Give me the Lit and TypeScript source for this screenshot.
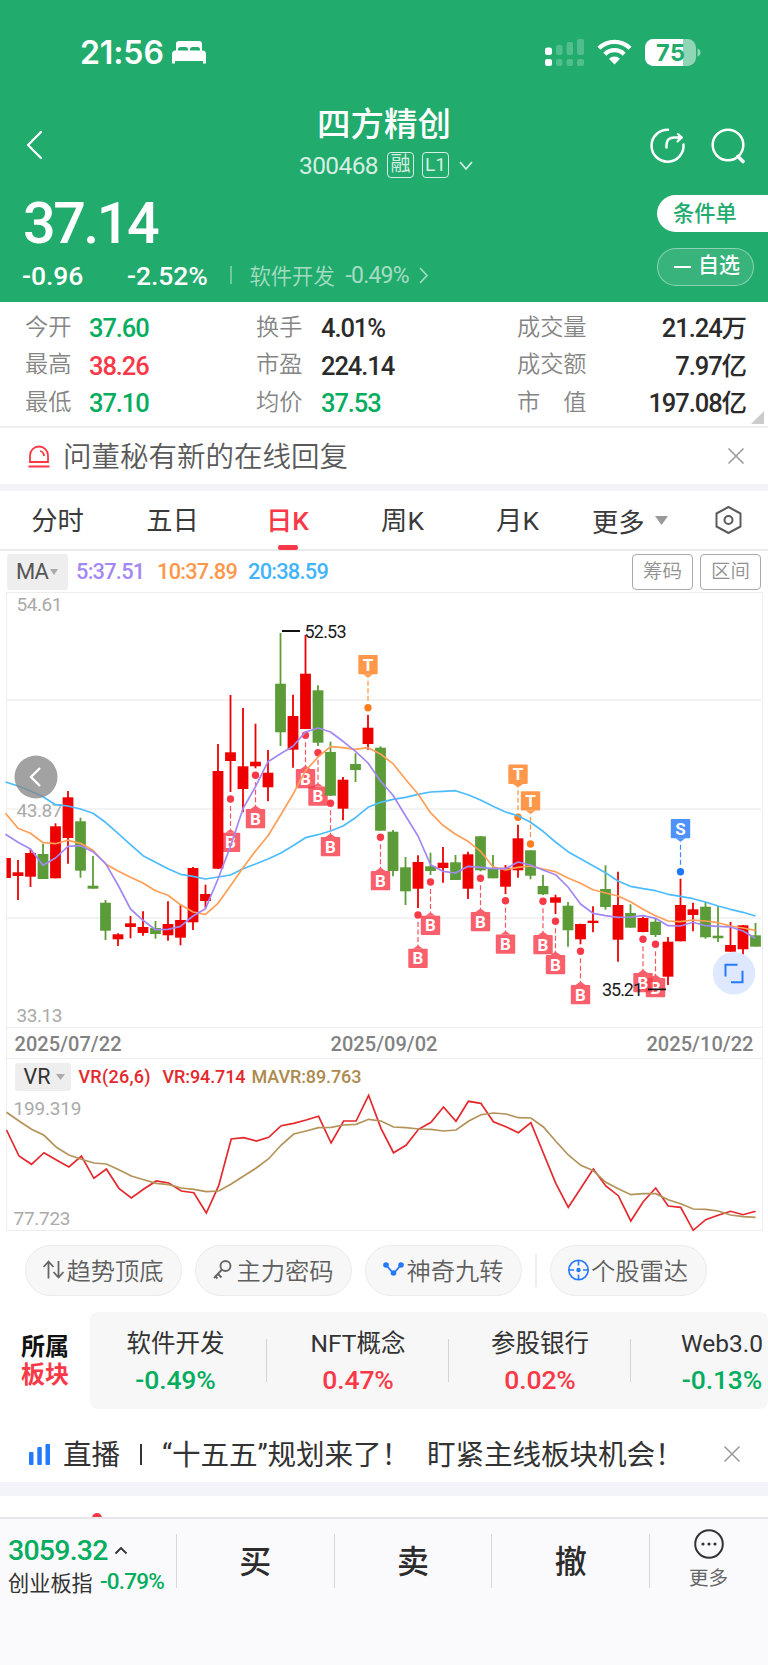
import { LitElement, html, svg, css } from "lit";
import { customElement } from "lit/decorators.js";
import { classMap } from "lit/directives/class-map.js";

const shared = css`
  :host {
    display: block;
    box-sizing: border-box;
    font-family: Roboto, "Noto Sans CJK SC", sans-serif;
  }
  * { box-sizing: border-box; }
  svg { display: block; flex: none; overflow: visible; }
  .num { font-weight: 500; letter-spacing: -0.035em; white-space: nowrap; }
  .up { color: #f93947; }
  .down { color: #06ad5e; }
`;

/* ---------- header ---------- */

@customElement("stock-header")
class StockHeader extends LitElement {
  static styles = [shared, css`
    :host { background: #21ab6d; color: #fff; height: 302px; }
    .status { height: 104px; display: flex; align-items: center; padding: 0 67px 0 80px; }
    .clock { font: 600 32px/40px Inter, sans-serif; letter-spacing: -.1px; width: 92px; padding-top: 2px; }
    .grow { flex: 1; }
    .wifi { margin: 0 13px; }
    .nav { height: 80px; display: flex; align-items: center; padding: 2px 23px 0 26px; }
    .title { flex: 1; display: flex; flex-direction: column; align-items: center; padding-left: 76px; }
    .name { font-size: 33.5px; line-height: 44px; font-weight: 500; margin-top: -4px; }
    .code { display: flex; align-items: center; height: 36px; color: rgba(255,255,255,.82); padding-left: 4px; }
    .code .num { font-size: 24.5px; width: 88px; font-weight: 400; letter-spacing: -.6px; }
    .tag { border: 1.5px solid currentColor; border-radius: 4px; height: 26px; width: 27px; font-size: 20px; line-height: 23px; text-align: center; margin-right: 8px; }
    .tag.small { font-size: 19px; margin-right: 10px; }
    .tools { display: flex; gap: 26px; }
    .body { display: flex; height: 118px; }
    .left { flex: 1; padding-left: 23px; }
    .price { font-size: 57.5px; line-height: 80px; letter-spacing: -2.5px; font-weight: 500; }
    .delta { display: flex; align-items: center; height: 26px; font-size: 26.5px; margin-top: -2px; }
    .abs { width: 105px; margin-left: -1px; letter-spacing: -.003em; }
    .pct { width: 103px; letter-spacing: -.003em; }
    .sep { width: 1.5px; height: 18px; background: rgba(255,255,255,.35); margin-right: 18px; }
    .sector { font-size: 21.3px; color: rgba(255,255,255,.6); width: 96px; font-weight: 350; margin-top: -2px; }
    .spct { font-size: 23px; color: rgba(255,255,255,.6); font-weight: 400; width: 73px; }
    .right { width: 111px; padding-top: 11px; display: flex; flex-direction: column; gap: 16px; }
    .cond { height: 37px; border-radius: 19px 0 0 19px; background: #fff; color: #21ab6d; font-size: 21.2px; line-height: 37px; padding-left: 16px; font-weight: 500; }
    .fav { height: 38px; width: 97px; border-radius: 19px; border: 1px solid rgba(255,255,255,.42); background: rgba(255,255,255,.1); font-size: 21px; line-height: 31px; font-weight: 500; display: flex; align-items: center; padding: 0 0 4px 16px; gap: 7px; }
    .dash { width: 17px; height: 2px; background: #fff; margin-top: 3px; }
  `];
  render() {
    return html`
      <div class="status">
        <span class="clock">21:56</span>
        <svg width="34" height="24" viewBox="0 0 34 24" fill="#fff"><path d="M4 12V4a3 3 0 0 1 3-3h20a3 3 0 0 1 3 3v8h-2V9.500a2.500 2.500 0 0 0-2.500-2.500h-5A2.500 2.500 0 0 0 18 9.500V12h-2V9.500A2.500 2.500 0 0 0 13.500 7h-5A2.500 2.500 0 0 0 6 9.500V12z"/><path d="M0 23.500V14a3.500 3.500 0 0 1 3.500-3.500h27A3.500 3.500 0 0 1 34 14v9.500h-3V21H3v2.500z"/></svg>
        <span class="grow"></span>
        <svg width="39" height="27" viewBox="0 0 39 27" fill="#fff">
          <rect y="8.500" width="7" height="7.500" rx="2.200"/><rect y="20" width="7" height="7" rx="2.200"/>
          <g opacity=".22"><rect x="11" y="6" width="6.500" height="10" rx="2"/><rect x="21.500" y="3" width="6.500" height="13" rx="2"/><rect x="32" y="0" width="7" height="16" rx="2"/><rect x="11" y="20" width="6.500" height="7" rx="2"/><rect x="21.500" y="20" width="6.500" height="7" rx="2"/><rect x="32" y="20" width="7" height="7" rx="2"/></g>
        </svg>
        <svg class="wifi" width="35" height="26" viewBox="0 0 35 26"><path d="M17.500 25.500L12 19.800a8 8 0 0 1 11 0z" fill="#fff"/><path d="M2 9.200a22 22 0 0 1 31 0M7.800 15.200a13.700 13.700 0 0 1 19.400 0" fill="none" stroke="#fff" stroke-width="4.300"/></svg>
        <svg width="56" height="27" viewBox="0 0 56 27"><defs><clipPath id="c"><rect width="38" height="27"/></clipPath></defs><rect width="51" height="27" rx="8.500" fill="#fff" opacity=".5"/><rect width="51" height="27" rx="8.500" fill="#fff" clip-path="url(#c)"/><path d="M52.500 9.500q3 1 3 4t-3 4z" fill="#fff" opacity=".5"/><text x="25.500" y="22" font-family="Inter, sans-serif" font-size="23.500" font-weight="700" text-anchor="middle" textLength="29" fill="#21ab6d">75</text></svg>
      </div>
      <div class="nav">
        <svg width="16" height="28" viewBox="0 0 16 28"><path d="M15 1L2 14l13 13" fill="none" stroke="#fff" stroke-width="2.300" stroke-linecap="round" stroke-linejoin="round"/></svg>
        <div class="title">
          <div class="name">四方精创</div>
          <div class="code"><span class="num">300468</span><span class="tag">融</span><span class="tag small">L1</span>
            <svg width="14" height="9" viewBox="0 0 14 9"><path d="M1 1l6 7 6-7" fill="none" stroke="currentColor" stroke-width="1.700"/></svg></div>
        </div>
        <div class="tools">
          <svg width="35" height="35" viewBox="0 0 35 35" fill="none" stroke="#fff" stroke-width="2.500" stroke-linecap="round" stroke-linejoin="round"><path d="M18 1.700A16 16 0 1 0 33.500 16.500"/><path d="M16.500 19.500v-2.500q0-7.500 8-7.500h6"/><path d="M28 6l4 3.500-4.500 4" fill="#fff" stroke-width="2"/></svg>
          <svg width="34" height="35" viewBox="0 0 34 35" fill="none" stroke="#fff" stroke-width="2.500"><circle cx="17" cy="17" r="15.300"/><path d="M27 28.500l5 5" stroke-width="3.600" stroke-linecap="round"/></svg>
        </div>
      </div>
      <div class="body">
        <div class="left">
          <div class="price">37.14</div>
          <div class="delta"><span class="num abs">-0.96</span><span class="num pct">-2.52%</span><span class="sep"></span><span class="sector">软件开发</span><span class="num spct">-0.49%</span>
            <svg width="9" height="17" viewBox="0 0 9 17"><path d="M1 1l7 7.500-7 7.500" fill="none" stroke="#fff" stroke-opacity=".6" stroke-width="1.600"/></svg></div>
        </div>
        <div class="right"><div class="cond">条件单</div><div class="fav"><span class="dash"></span>自选</div></div>
      </div>`;
  }
}

/* ---------- quote table ---------- */

const QUOTES: [string, string, string][][] = [
  [["今开", "37.60", "down"], ["换手", "4.01%", ""], ["成交量", "21.24万", ""]],
  [["最高", "38.26", "up"], ["市盈", "224.14", ""], ["成交额", "7.97亿", ""]],
  [["最低", "37.10", "down"], ["均价", "37.53", "down"], ["市　值", "197.08亿", ""]],
];

@customElement("quote-table")
class QuoteTable extends LitElement {
  static styles = [shared, css`
    :host { height: 126px; padding: 7px 22px 0 25px; border-bottom: 2px solid #efefef; background: #fff; position: relative; }
    .row { display: grid; grid-template-columns: 64px 167px 65px 196px 1fr auto; align-items: center; height: 37.5px; line-height: 36px; }
    .label { font-size: 23.200px; color: #858585; font-weight: 350; margin-top: -2px; }
    .value { font-size: 25.500px; color: #2b2b2b; padding-top: 1px; letter-spacing: -.042em; }
    .value.up { color: #f93947; }
    .value.down { color: #06ad5e; }
    .corner { position: absolute; right: 4px; bottom: 2px; }
  `];
  render() {
    return html`${QUOTES.map(r => html`<div class="row">${r.map(([l, v, c]) => html`
      <span class="label">${l}</span><span class=${classMap({ num: true, value: true, up: c === "up", down: c === "down" })}>${v}</span>`)}</div>`)}
      <svg class="corner" width="13" height="13"><path d="M13 0V13H0z" fill="#ccc"/></svg>`;
  }
}

/* ---------- candle chart ---------- */

// [high, low, body top, body bottom, 1 = rising]
const CANDLES = [
  [858,878,858,878,1],[860,900,872.3,876],[849.3,887,853,876.7],[843.7,879,854,879,0],[823.3,878.3,826.3,878.3],[791,863.7,797.3,838],[817.7,877.7,821.3,870.7,0],[856,888.7,885.7,888.7,0],[900,940,902.7,930.7,0],[933.3,946,934.3,939.3],
  [916,938.3,923.3,927],[911.3,935.7,927,933],[921,938.7,928,934,0],[901.3,940.7,924,935.3],[904.3,945.3,920,937.7],[867,930,868,922.3],[884.7,908.3,894,901],[744,869,771,868.7],[695,792,752.3,761],[708,812.3,766.3,789],
  [723.7,768.3,761.7,766.3],[750,801.3,772.7,787.3],[633,746,683.7,732.3,0],[694.7,767.7,716,749.7],[635,729,673.7,729],[685.3,746,690.3,742.7,0],[741.7,796,752,795.7,0],[777,820.3,779.7,808.7],[753.3,782,764,770,0],[715,749.7,727.7,744],
  [746.3,830.7,747.7,830.7,0],[830,876.3,831.7,871,0],[857,905,867.3,891.3,0],[855.3,908,862,888.7],[852.7,875,866.3,871,0],[847,882.7,862.7,868],[855,880,862.3,880,0],[851.7,899,854.3,888.7],[836,871.3,836.3,870.3,0],[855,878.3,869,878.3,0],
  [865,894,867.7,886.7],[824.7,877.7,838.3,870.3],[850.3,879.3,850.3,875.7,0],[875,895,886,894.3,0],[894.7,914,897.3,902.7],[902,946.7,905.7,930.3,0],[923.7,944.3,924,939.3],[906.3,932.3,920.7,923],[865.3,909.7,889,907,0],[871.7,961.7,905,939.7],
  [904.3,927.7,913,927.7,0],[916.7,932.3,918,932],[919,937,921.7,935,0],[937,985,941.7,976.7],[878.7,941.3,905,941.3],[902.7,931.3,909.3,915],[902,938.7,906.7,937.3,0],[906.3,942,935.7,938.3,0],[922,951.7,945,951.7],[925,955.3,925.3,949.3],[923,946.7,935.3,946.7,0],
];
const MA20 = [782,786,791,796.7,804.7,806,809,813.3,822.3,833.3,844.7,855.7,862.3,868.7,874.3,876.3,879,877,875,868.7,864,859,853.3,845.7,837.7,834.7,831,826,817.7,807.3,802.3,799.3,797.3,794.3,792,791.3,790.7,794.7,800,806.3,812,815.7,822.3,831.3,842,851.7,858.7,865.7,872.7,881,886.3,888.7,890.7,894.3,896.3,898.7,902,906,909.3,912.3,916];
const MA10 = [813.3,828.3,833.3,842.7,843.7,840.3,843.3,850.3,864,871,877.3,883,890.7,895.3,904.7,912,914.3,903.3,885.7,867.7,851,835.7,815.3,794.3,770.7,757,746.7,747.7,749.3,747.7,754,763.7,779.3,794,812.7,825.3,834.3,841.3,851.3,866.7,870,867.3,866,869,871.7,878,883.3,889.7,893,896,901.7,909.3,915.7,921,921.7,920,921,922.7,926,928,930.3];
const MA5 = [834.3,842.3,849,865.3,858,846.3,845.7,851.7,863.3,885,909,920.3,929.7,929.3,926.3,916,908.7,879,846.3,808.7,786.7,761.7,753.7,746.3,732,728,732,741.3,751.3,763,781,795.3,815.7,836,864.7,871.3,873,866.3,867.3,868.7,868.7,862,865,870,874.7,887,904,913.3,915.7,917.3,917,915.7,918.3,925.7,926,922.3,925.7,926.3,927,931,938.3];
// [candle index, dot y, kind]
const MARKS: [number, number, "B" | "T" | "S"][] = [
  [52,944.3,"B"],[51,939.3,"B"],[46,951.3,"B"],[44,921.3,"B"],[43,901.3,"B"],[40,900.7,"B"],[38,878.3,"B"],[34,882,"B"],[33,915,"B"],[30,837.3,"B"],
  [24,735.3,"B"],[25,752.7,"B"],[26,803.3,"B"],[20,775.3,"B"],[18,799,"B"],[29,707.7,"T"],[41,817.3,"T"],[42,844,"T"],[54,871.7,"S"],
];
const TINT = { B: "#f93947", T: "#ff7f1f", S: "#2176f8" };

const cx = (i: number) => 5.5 + 12.5 * i;
const line = (v: number[], x: (i: number) => number) => v.map((y, i) => `${x(i).toFixed(1)},${y}`).join(" ");

@customElement("candle-chart")
class CandleChart extends LitElement {
  static styles = [shared, css`
    .frame { margin: 0 5.5px; border: 1.5px solid #eee; height: 467px; }
    .dates { display: flex; justify-content: space-between; align-items: center; height: 31px; padding: 2px 8px 0; font-size: 20px; color: #828282; border-top: 1.500px solid #eee; }
    .dates .num { font-weight: 500; letter-spacing: .05px; }
    text { font-family: Roboto, sans-serif; }
    .axis { fill: #aaa; font-size: 19px; }
    .peak { fill: #1b1b1b; font-size: 18px; }
    .flag { fill: #fff; font-size: 17px; font-weight: 700; }
    .ma { fill: none; stroke-width: 1.700; stroke-linejoin: round; }
  `];
  mark([i, y, k]: [number, number, "B" | "T" | "S"]) {
    const x = cx(i), c = TINT[k], below = k === "B";
    const top = below ? y + 33.7 : y - 52.7;
    const tip = below ? `M${x - 5} ${top}l5 -3.500 5 3.500z` : `M${x - 5} ${top + 19.3}l5 3.500 5 -3.500z`;
    return svg`
      <path d="M${x} ${below ? y + 7 : y - 7}V${below ? top - 3 : top + 23}" stroke=${c} stroke-width="1.200" stroke-dasharray="5 2.500" opacity=".85"/>
      <circle cx=${x} cy=${y} r="3.700" fill=${c}/>
      <g opacity=".8"><rect x=${x - 9.7} y=${top} width="19.400" height="19.300" rx="1" fill=${c}/><path d=${tip} fill=${c}/></g>
      <text class="flag" x=${x} y=${top + 15.7} text-anchor="middle">${k}</text>`;
  }
  render() {
    return html`<div class="frame">
      <svg width="754" height="434" viewBox="7 593 754 434">
        <path d="M7 700H761M7 809H761M7 918H761" stroke="#efefef" stroke-width="1.300"/>
        <g class="axis"><text x="16.500" y="611.300" textLength="46">54.61</text><text x="16.500" y="816.700" textLength="46">43.87</text><text x="16.500" y="1022" textLength="46">33.13</text></g>
        ${MARKS.map(m => this.mark(m))}
        ${CANDLES.map(([h, l, t, b, up = 1], i) => {
          const c = up ? "#ee0000" : "#5c9c38", x = cx(i);
          return svg`${i ? svg`<path d="M${x} ${h}V${l}" stroke=${c} stroke-width="1.800"/>` : null}<rect x=${Math.max(x - 5.4, 6.5)} y=${t} width=${i ? 10.8 : 4.4} height=${b - t} fill=${c}/>`;
        })}
        <polyline class="ma" stroke="#4cbcff" points=${line(MA20, cx)}/>
        <polyline class="ma" stroke="#ff9f57" points=${line(MA10, cx)}/>
        <polyline class="ma" stroke="#a388f5" points=${line(MA5, cx)}/>
        <path d="M282 631h18M648 989.300h18" stroke="#111" stroke-width="1.800"/>
        <text class="peak" x="304.500" y="638" textLength="42">52.53</text>
        <text class="peak" x="602" y="996" textLength="41">35.21</text>
        <circle cx="36" cy="777" r="21.500" fill="#888" opacity=".78"/>
        <path d="M40 768l-9 9 9 9" fill="none" stroke="#fff" stroke-width="2.400"/>
        <circle cx="734" cy="973.300" r="21.300" fill="#dce7fe" opacity=".94"/>
        <path d="M725.500 976.500V964.700H737.500M742.500 970.700V982.300H731" fill="none" stroke="#2579fb" stroke-width="2"/>
      </svg>
      <div class="dates"><span class="num">2025/07/22</span><span class="num">2025/09/02</span><span class="num">2025/10/22</span></div>
    </div>`;
  }
}

/* ---------- VR indicator ---------- */

const VR = [330,408,433,398,420,441,408,475,447,505,534,507,483,489,513,518,579,497,357,353,363,352,317,310,300,289,369,303,303,226,325,398,376,328,307,261,304,244,250,305,320,338,308,400,490,562,505,447,498,527,603,545,504,558,562,631,599,586,574,584,574];
const MAVR = [277,303,328,346,382,405,418,429,432,449,468,479,490,494,504,508,515,513,492,468,444,416,375,342,333,323,322,315,313,298,303,321,323,327,328,333,330,304,284,279,282,293,294,321,364,405,436,452,487,506,524,521,521,539,551,567,568,573,585,590,592];

@customElement("vr-chart")
class VrChart extends LitElement {
  static styles = [shared, css`
    .frame { margin: 0 5.5px; border: 1.5px solid #eee; border-top: 0; height: 172px; }
    .head { height: 33px; display: flex; align-items: center; padding: 2px 0 0 8px; font-size: 18px; }
    .pick { width: 56px; height: 28px; background: #eee; border-radius: 3px; display: flex; align-items: center; gap: 6px; padding-left: 9px; font-size: 21.500px; color: #333; margin-right: 8px; }
    .head .num { font-weight: 500; letter-spacing: -.1px; }
    .head .a { color: #e4282d; width: 84px; letter-spacing: .25px; }
    .b { color: #e4282d; width: 89px; }
    .c { color: #ad8a4d; }
    text { font-family: Roboto, sans-serif; fill: #aaa; font-size: 19px; }
  `];
  render() {
    const x = (i: number) => 6.5 + 12.485 * i;
    const y = (v: number) => +(1020 + v / 3).toFixed(1);
    return html`<div class="frame">
      <div class="head"><span class="pick">VR<svg width="9" height="6"><path d="M0 0h9L4.500 6z" fill="#aaa"/></svg></span>
        <span class="num a">VR(26,6)</span><span class="num b">VR:94.714</span><span class="num c">MAVR:89.763</span></div>
      <svg width="754" height="138" viewBox="7 1092 754 138">
        <text x="13.500" y="1115" textLength="68">199.319</text><text x="13.500" y="1225.300" textLength="57">77.723</text>
        <polyline fill="none" stroke="#e4282d" stroke-width="1.700" points=${line(VR.map(y), x)}/>
        <polyline fill="none" stroke="#b3935a" stroke-width="1.700" points=${line(MAVR.map(y), x)}/>
      </svg></div>`;
  }
}

/* ---------- page ---------- */

const ICONS = {
  trend: svg`<g fill="none" stroke="#666" stroke-width="1.800"><path d="M5.500 18.500V2M0.500 7l5-5.500 5 5.500M15.500 1v16.500M10.500 12l5 5.500 5-5.500"/></g>`,
  key: svg`<g fill="none" stroke="#666" stroke-width="1.900"><circle cx="12.500" cy="6" r="5"/><path d="M9 9.500L1 18M5 14l3.500 3.500M2.500 16.500l2 2"/></g>`,
  nine: svg`<path d="M3 5l7.500 8.500L18 5" fill="none" stroke="#2579fb" stroke-width="1.800"/><g fill="#2579fb"><circle cx="3" cy="5" r="2.800"/><circle cx="10.500" cy="13" r="2.800"/><circle cx="18" cy="5" r="2.800"/></g>`,
  radar: svg`<g fill="none" stroke="#2579fb" stroke-width="1.600"><circle cx="10.500" cy="10" r="9.700"/><path d="M10.500 .500v5M10.500 14.500v5M1 10h5M15 10h5"/></g><circle cx="10.500" cy="10" r="2.200" fill="#2579fb"/>`,
};

@customElement("app-root")
class AppRoot extends LitElement {
  static styles = [shared, css`
    :host { width: 768px; height: 1665px; background: #fff; overflow: hidden; }
    .notice { height: 56px; display: flex; align-items: center; padding: 0 24px 0 28px; color: #5a5a5a; font-size: 28.500px; font-weight: 350; }
    .notice .msg { flex: 1; padding: 0 0 3px 13px; }
    .band { background: #f2f4f9; height: 7px; }
    .tabs { height: 60px; display: flex; align-items: center; border-bottom: 2px solid #eaeaea; font-size: 26.300px; color: #3a3a3a; }
    .tab { width: 115px; text-align: center; height: 58px; line-height: 60px; }
    .tab.first { width: 115px; }
    .tab.on { color: #f93947; display: flex; flex-direction: column; align-items: center; font-weight: 500; }
    .bar { width: 20px; height: 5px; border-radius: 2px; background: #f93947; margin-top: -6px; flex: none; }
    .more { display: flex; align-items: center; gap: 10px; padding-left: 17px; width: 140px; }
    .ma { height: 41px; display: flex; align-items: center; padding: 0 7px; font-size: 21.800px; }
    .pick { width: 61px; height: 36px; border-radius: 3px; background: #eee; color: #555; display: flex; align-items: center; padding-left: 9px; gap: 2px; font-size: 22px; margin-right: 8px; letter-spacing: -1px; }
    .m5 { color: #a388f5; width: 81px; }
    .m10 { color: #ff974a; width: 91px; }
    .m20 { color: #42b4fb; flex: 1; }
    .btn { width: 61px; height: 36px; border: 1.500px solid #aaa; border-radius: 4px; font-size: 19.500px; line-height: 33px; text-align: center; color: #929292; margin-left: 7px; font-weight: 350; }
    .pills { height: 81px; display: flex; align-items: center; padding: 0 0 2px 25px; gap: 13px; }
    .pill { width: 157px; height: 51px; border-radius: 26px; border: 1.500px solid #ebebeb; background: #f7f7f7; display: flex; align-items: center; justify-content: center; gap: 2px; color: #5f5f5f; font-size: 24.300px; white-space: nowrap; font-weight: 350; padding-bottom: 2px; }
    .vline { width: 1.500px; height: 33px; background: #eee; }
    .sectors { display: flex; height: 97px; }
    .own { width: 90px; padding: 21px 0 0 21px; font-size: 24px; line-height: 28px; font-weight: 700; color: #111; }
    .card { width: 678px; background: #f7f7f7; border-radius: 8px; display: flex; overflow: hidden; height: 97px; align-items: center; }
    .cell { flex: none; width: 182px; text-align: center; }
    .cell.first { width: 177px; padding-right: 6px; }
    .cell + .cell { box-shadow: -1px 0 0 #d4d4d4; }
    .cell { height: 43px; display: flex; flex-direction: column; align-items: center; justify-content: center; }
    .cname { font-size: 24.500px; line-height: 36px; color: #333; white-space: nowrap; margin-top: 3px; }
    .cpct { font-size: 26.500px; line-height: 36px; letter-spacing: -.005em; }
    .live { height: 73px; display: flex; align-items: center; padding: 17px 28px 0 29px; font-size: 28.600px; color: #333; white-space: nowrap; }
    .l1, .l2, .l3 { padding-bottom: 4px; }
    .l1 { width: 70px; padding-left: 13px; }
    .bar2 { width: 2px; height: 21px; background: #333; margin: 0 20px; }
    .l2 { width: 265px; letter-spacing: -.1px; }
    .l3 { flex: 1; letter-spacing: -.1px; }
    .gap { height: 14px; background: #f2f4f9; }
    .peek { height: 21px; overflow: hidden; padding: 17px 0 0 92px; }
    .dot { width: 10px; height: 10px; border-radius: 5px; background: #f93947; }
    .foot { height: 148px; background: #fafafc; border-top: 2px solid #e6e6e9; display: flex; align-items: flex-start; padding: 15px 0 0; }
    .index { width: 176px; padding-left: 8px; color: #333; height: 54px; }
    .irow { display: flex; align-items: center; height: 32px; }
    .irow + .irow { height: 30px; }
    .big { font-size: 28.500px; width: 107px; letter-spacing: -.027em; }
    .iname { font-size: 21.200px; width: 92px; }
    .ipct { font-size: 22.500px; }
    .act { width: 157.700px; border-left: 1.500px solid #d8d8da; height: 54px; display: flex; align-items: center; justify-content: center; font-size: 32px; font-weight: 500; color: #2c2c2c; padding-bottom: 4px; }
    .act.last { width: 118px; flex-direction: column; font-size: 19.500px; font-weight: 400; color: #666; justify-content: flex-start; line-height: 24px; gap: 8px; }
    .act.last svg { margin-top: -5px; }
  `];
  cross() {
    return html`<svg width="16" height="16" viewBox="0 0 16 16"><path d="M.500 .500l15 15M15.500 .500l-15 15" stroke="#999" stroke-width="1.500"/></svg>`;
  }
  pill(icon: keyof typeof ICONS, text: string) {
    return html`<div class="pill"><svg width="21" height="20" viewBox="0 0 21 20">${ICONS[icon]}</svg>${text}</div>`;
  }
  cell(name: string, pct: string, first = false) {
    const down = pct.startsWith("-");
    return html`<div class=${classMap({ cell: true, first })}><span class="cname">${name}</span><span class=${classMap({ num: true, cpct: true, up: !down, down })}>${pct}</span></div>`;
  }
  render() {
    return html`
      <stock-header></stock-header>
      <quote-table></quote-table>
      <div class="notice">
        <svg width="22" height="23" viewBox="0 0 22 23" fill="none" stroke="#f93947" stroke-width="1.800"><path d="M2 17V10.500a9 9 0 0 1 18 0V17zM.500 21.500h21"/><path d="M12 6q4 1 4 5"/></svg>
        <span class="msg">问董秘有新的在线回复</span>${this.cross()}
      </div>
      <div class="band"></div>
      <div class="tabs">
        <span class="tab first">分时</span><span class="tab">五日</span><span class="tab on">日K<span class="bar"></span></span><span class="tab">周K</span><span class="tab">月K</span>
        <span class="more">更多<svg width="13" height="9"><path d="M0 0h13L6.500 9z" fill="#999"/></svg></span>
        <svg width="27" height="28" viewBox="0 0 27 28" fill="none" stroke="#5c5c5c" stroke-width="2" stroke-linejoin="round"><path d="M13.500 1L25.500 7.500V20.500L13.500 27 1.500 20.500V7.500z"/><circle cx="13.500" cy="14" r="4"/></svg>
      </div>
      <div class="ma"><span class="pick">MA<svg width="8" height="6"><path d="M0 0h8L4 6z" fill="#aaa"/></svg></span>
        <span class="num m5">5:37.51</span><span class="num m10">10:37.89</span><span class="num m20">20:38.59</span>
        <span class="btn">筹码</span><span class="btn">区间</span></div>
      <candle-chart></candle-chart>
      <vr-chart></vr-chart>
      <div class="pills">${this.pill("trend", "趋势顶底")}${this.pill("key", "主力密码")}${this.pill("nine", "神奇九转")}<span class="vline"></span>${this.pill("radar", "个股雷达")}</div>
      <div class="sectors"><div class="own">所属<br><span class="up">板块</span></div>
        <div class="card">${this.cell("软件开发", "-0.49%", true)}${this.cell("NFT概念", "0.47%")}${this.cell("参股银行", "0.02%")}${this.cell("Web3.0", "-0.13%")}</div></div>
      <div class="live">
        <svg width="21" height="21" viewBox="0 0 21 21" fill="#2579fb"><rect y="8" width="4.500" height="13" rx="1"/><rect x="8.300" y="3" width="4.500" height="18" rx="1"/><rect x="16.500" y="0" width="4.500" height="21" rx="1"/></svg>
        <span class="l1">直播</span><span class="bar2"></span><span class="l2">“十五五”规划来了！</span><span class="l3">盯紧主线板块机会！</span>${this.cross()}
      </div>
      <div class="gap"></div>
      <div class="peek"><div class="dot"></div></div>
      <div class="foot">
        <div class="index">
          <div class="irow"><span class="num big down">3059.32</span><svg width="12" height="7" viewBox="0 0 12 7"><path d="M.500 6.500L6 1l5.500 5.500" fill="none" stroke="#333" stroke-width="1.800"/></svg></div>
          <div class="irow"><span class="iname">创业板指</span><span class="num ipct down">-0.79%</span></div>
        </div>
        <div class="act">买</div><div class="act">卖</div><div class="act">撤</div>
        <div class="act last"><svg width="30" height="30" viewBox="0 0 30 30"><circle cx="15" cy="15" r="13.800" fill="none" stroke="#333" stroke-width="2"/><g fill="#333"><circle cx="9" cy="15" r="1.600"/><circle cx="15" cy="15" r="1.600"/><circle cx="21" cy="15" r="1.600"/></g></svg>更多</div>
      </div>`;
  }
}
